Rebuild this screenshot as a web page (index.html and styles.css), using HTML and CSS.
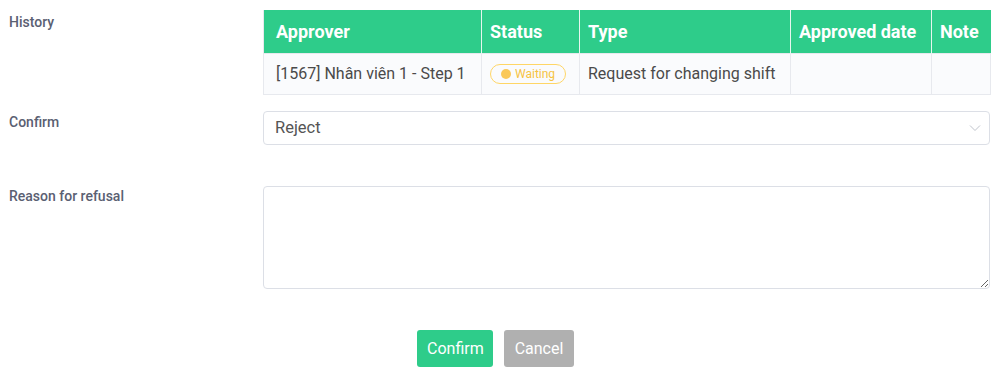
FILE: index.html
```html
<!DOCTYPE html>
<html lang="en">
<head>
  <meta charset="UTF-8" />
  <meta name="viewport" content="width=device-width, initial-scale=1.0" />
  <title>Approve request</title>
  <link rel="stylesheet" href="styles.css">
</head>
<body>
  <form class="approve-form">
    <div class="form-row">
      <label class="form-label">History</label>
      <div class="form-field">
        <table class="history-table">
          <thead>
            <tr>
              <th class="col-approver">Approver</th>
              <th class="col-status">Status</th>
              <th class="col-type">Type</th>
              <th class="col-date">Approved date</th>
              <th class="col-note">Note</th>
            </tr>
          </thead>
          <tbody>
            <tr>
              <td>[1567] Nhân viên 1 - Step 1</td>
              <td><span class="badge-waiting"><span class="dot"></span>Waiting</span></td>
              <td>Request for changing shift</td>
              <td></td>
              <td></td>
            </tr>
          </tbody>
        </table>
      </div>
    </div>

    <div class="form-row row-confirm">
      <label class="form-label">Confirm</label>
      <div class="form-field">
        <div class="select-box">
          <span>Reject</span>
          <svg class="chevron" width="12" height="8" viewBox="0 0 12 8"><path d="M1 1.5 L6 6.5 L11 1.5" fill="none" stroke="#c0c4cc" stroke-width="1"/></svg>
        </div>
      </div>
    </div>

    <div class="form-row row-reason">
      <label class="form-label">Reason for refusal</label>
      <div class="form-field">
        <textarea class="reason-input"></textarea>
      </div>
    </div>

    <div class="form-actions">
      <button type="button" class="btn btn-confirm">Confirm</button>
      <button type="button" class="btn btn-cancel">Cancel</button>
    </div>
  </form>
</body>
</html>
```

FILE: styles.css
```css
body { margin: 0; font-family: Roboto, "Liberation Sans", Arial, sans-serif; color: #444; background: #fff; }
.approve-form { padding: 10px 16px 0 9px; }
.form-row { display: grid; grid-template-columns: 254px 727px; }
.form-label { font-size: 14px; font-weight: 500; color: #5a6072; padding-top: 4px; line-height: 16px; }
.row-confirm { margin-top: 16px; }
.row-confirm .form-label { padding-top: 3px; }
.row-reason { margin-top: 41px; }
.row-reason .form-label { padding-top: 2px; }

.history-table { width: 727px; border-collapse: collapse; table-layout: fixed; font-size: 16px; }
.history-table th, .history-table td { box-sizing: border-box; }
.history-table th { background: #2ecc8a; color: #fff; font-weight: 700; font-size: 18px; text-align: left; height: 43px; padding: 0 8px; border-left: 1px solid #e6f6ee; white-space: nowrap; }
.history-table th:first-child, .history-table td:first-child { padding-left: 12px; border-left: 1px solid #e7e9ee; }
.history-table td { background: #fafbfd; height: 41px; padding: 0 8px; border: 1px solid #e7e9ee; color: #4a4a4a; white-space: nowrap; }
.col-approver { width: 218px; }
.col-status { width: 98px; }
.col-type { width: 211px; }
.col-date { width: 141px; }
.col-note { width: 59px; }

.badge-waiting { display: inline-flex; align-items: center; gap: 4px; height: 18px; padding: 0 10px; border: 1px solid #ffd666; border-radius: 10px; color: #f6c343; font-size: 12px; }
.badge-waiting .dot { width: 10px; height: 10px; border-radius: 50%; background: #fac858; }

.select-box { display: flex; align-items: center; justify-content: space-between; height: 32px; padding: 0 8px 0 11px; border: 1px solid #dcdfe6; border-radius: 4px; font-size: 16.5px; color: #555; }
.chevron { display: block; }

.reason-input { display: block; box-sizing: border-box; width: 727px; height: 103px; border: 1px solid #dcdfe6; border-radius: 4px; font-family: inherit; font-size: 14px; resize: both; }

.form-actions { display: flex; gap: 11px; margin-top: 41px; padding-left: 408px; }
.btn { height: 37px; padding: 0 10px; border: none; border-radius: 3px; color: #fff; font-family: inherit; font-size: 16px; cursor: pointer; }
.btn-confirm { background: #2ecc8a; width: 76px; }
.btn-cancel { background: #b0b0b0; width: 70px; }
```
